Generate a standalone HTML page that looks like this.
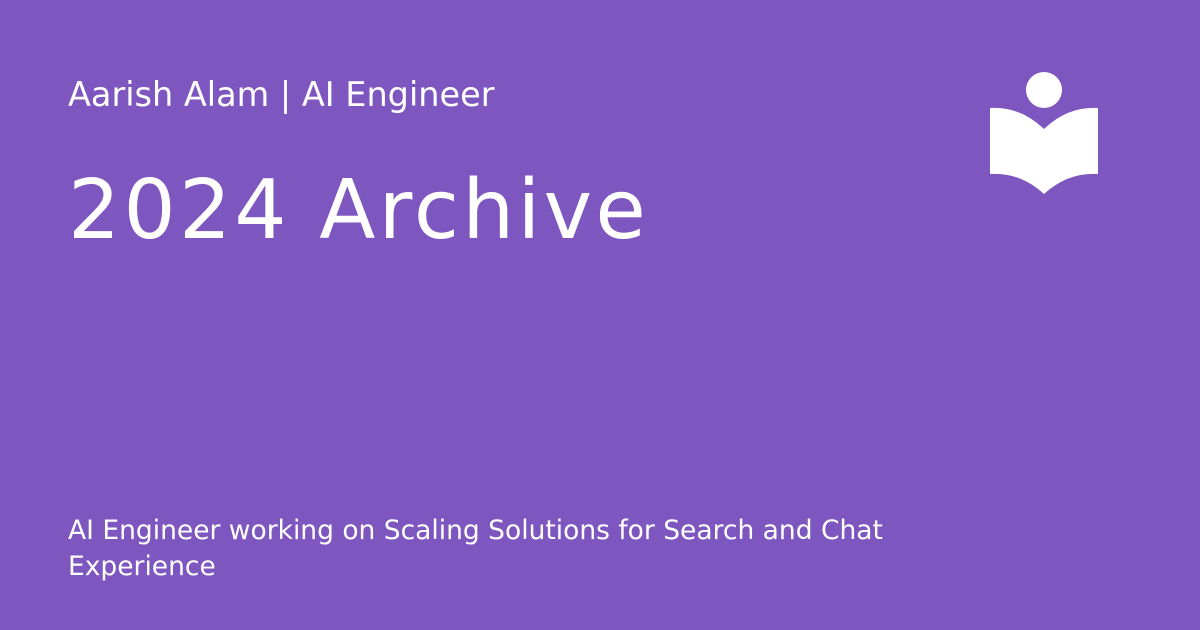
<!DOCTYPE html>
<html><head><style>
html,body{margin:0;padding:0}
body{width:1200px;height:630px;background:#7e56bf;position:relative;overflow:hidden;font-family:"DejaVu Sans","Liberation Sans",sans-serif;color:#fff}
.t{position:absolute;left:68px;white-space:nowrap}
</style></head><body>
<div class="t" style="top:75px;font-size:33.5px;">Aarish Alam | AI Engineer</div>
<div class="t" style="top:163px;font-size:82px;letter-spacing:3.3px;">2024 Archive</div>
<div class="t" style="top:513px;font-size:26.5px;line-height:36px;">AI Engineer working on Scaling Solutions for Search and Chat<br>Experience</div>
<svg style="position:absolute;left:0;top:0" width="1200" height="630">
<circle cx="1044" cy="90" r="18" fill="#fff"/>
<path d="M990 108 Q1020 106 1044 129 Q1068 106 1098 108 L1098 174 Q1068 172 1044 194 Q1020 172 990 174 Z" fill="#fff"/>
</svg>
</body></html>
